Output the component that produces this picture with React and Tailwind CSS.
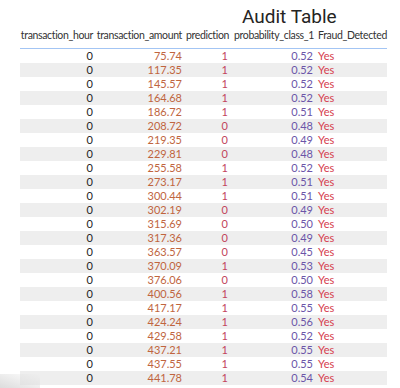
import React from 'react';

const rows = [
  ['75.74', 1, '0.52'],
  ['117.35', 1, '0.52'],
  ['145.57', 1, '0.52'],
  ['164.68', 1, '0.52'],
  ['186.72', 1, '0.51'],
  ['208.72', 0, '0.48'],
  ['219.35', 0, '0.49'],
  ['229.81', 0, '0.48'],
  ['255.58', 1, '0.52'],
  ['273.17', 1, '0.51'],
  ['300.44', 1, '0.51'],
  ['302.19', 0, '0.49'],
  ['315.69', 0, '0.50'],
  ['317.36', 0, '0.49'],
  ['363.57', 0, '0.45'],
  ['370.09', 1, '0.53'],
  ['376.06', 0, '0.50'],
  ['400.56', 1, '0.58'],
  ['417.17', 1, '0.55'],
  ['424.24', 1, '0.56'],
  ['429.58', 1, '0.52'],
  ['437.21', 1, '0.55'],
  ['437.55', 1, '0.55'],
  ['441.78', 1, '0.54'],
];

const cols = 'grid grid-cols-[75px_89px_47px_85px_71px]';

const App = () => {
  return (
    <div className="w-[400px] h-[388px] overflow-hidden bg-white relative" style={{ fontFamily: 'Lato, "Noto Sans", sans-serif' }}>
      {/* Title */}
      <div className="h-[28px] pl-[242px] pt-[6px]">
        <h1 className="text-[19px] leading-[22px] text-[#252423]" style={{ fontFamily: 'Roboto, "Noto Sans", sans-serif' }}>
          Audit Table
        </h1>
      </div>

      {/* Table */}
      <div className="ml-[20px] w-[367px]">
        <div className={`${cols} h-[21px] items-end pb-[7px] border-b border-[#a3c5f4] text-[10.5px] leading-[14px] tracking-[-0.35px] text-[#333333] whitespace-nowrap`}>
          <div className="text-right pr-[2px]">transaction_hour</div>
          <div className="text-right pr-[2px]">transaction_amount</div>
          <div className="text-right pr-[2px]">prediction</div>
          <div className="text-right pr-[2px]">probability_class_1</div>
          <div className="pl-[2px]">Fraud_Detected</div>
        </div>
        {rows.map(([amount, pred, prob], i) => (
          <div
            key={i}
            className={`${cols} h-[14px] items-center text-[11px] leading-[14px] ${i % 2 === 1 ? 'bg-[#eeeeee]' : 'bg-white'}`}
          >
            <div className="text-right pr-[2px] text-[#252423]">0</div>
            <div className="text-right pr-[2px] text-[#c0653e]">{amount}</div>
            <div className="text-right pr-[3px] text-[#c2455c]">{pred}</div>
            <div className="text-right pr-[3px] text-[#6b55a8]">{prob}</div>
            <div className="pl-[2px] text-[#d6404e]">Yes</div>
          </div>
        ))}
      </div>

      {/* bottom-left shadow */}
      <div className="absolute left-0 bottom-0 w-[40px] h-[14px] bg-gradient-to-tr from-[#dcdcdc] to-transparent pointer-events-none" />
    </div>
  );
};

export default App;
